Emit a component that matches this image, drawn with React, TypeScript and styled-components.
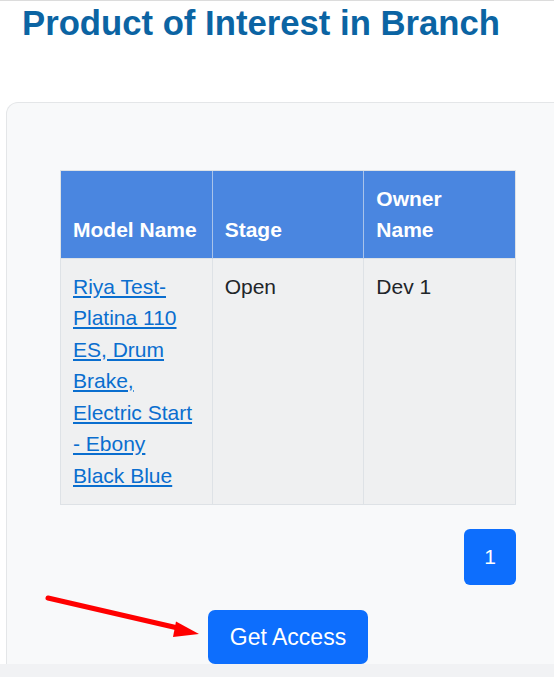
import React from "react";
import styled, { createGlobalStyle } from "styled-components";

const GlobalStyle = createGlobalStyle`
  html, body { margin: 0; padding: 0; overflow: hidden; background: #ffffff; }
  body { font-family: "Liberation Sans", Arial, sans-serif; }
`;

const Page = styled.div`
  position: relative;
  height: 677px;
  box-sizing: border-box;
  display: flex;
  flex-direction: column;
  overflow: hidden;
  border-top: 1px solid #dcdcdc;
`;

const Title = styled.h1`
  margin: 2px 0 0 22px;
  font-size: 34.7px;
  line-height: 1.2;
  font-weight: 700;
  color: #0b64a3;
  white-space: nowrap;
`;

const Card = styled.section`
  flex: 1;
  min-height: 0;
  margin: 57px -60px 0 6px;
  padding: 67px 0 0 53px;
  border: 1px solid #e4e6e8;
  border-bottom: none;
  border-radius: 12px 12px 0 0;
  background: #f8f9fa;
  overflow: hidden;
`;

const Content = styled.div`
  width: 456px;
  display: flex;
  flex-direction: column;
`;

const Table = styled.table`
  width: 456px;
  table-layout: fixed;
  border-collapse: separate;
  border-spacing: 0;
  border-top: 1px solid #dee2e6;
  border-left: 1px solid #dee2e6;
`;

const HeadCell = styled.th`
  background: #4a86e0;
  color: #ffffff;
  font-size: 21px;
  line-height: 1.5;
  font-weight: 700;
  text-align: left;
  vertical-align: bottom;
  padding: 12px;
  border-right: 1px solid #a9c3ea;
  border-bottom: 1px solid #dee2e6;
  &:last-child { border-right-color: #dee2e6; }
`;

const Cell = styled.td`
  background: #eff0f1;
  color: #212529;
  font-size: 21px;
  line-height: 1.5;
  vertical-align: top;
  padding: 12px 12px 13px;
  border-right: 1px solid #dee2e6;
  border-bottom: 1px solid #dee2e6;
`;

const ModelLink = styled.a`
  color: #0a6ecf;
  text-decoration: underline;
`;

const Pager = styled.div`
  display: flex;
  justify-content: flex-end;
  margin-top: 24px;
`;

const PageButton = styled.button`
  border: none;
  background: #0d6efd;
  color: #ffffff;
  font-family: inherit;
  font-size: 21px;
  line-height: 1.5;
  padding: 12px 20px;
  border-radius: 6px;
`;

const ActionRow = styled.div`
  display: flex;
  justify-content: center;
  margin-top: 25px;
`;

const AccessButton = styled.button`
  border: none;
  background: #0d6efd;
  color: #ffffff;
  font-family: inherit;
  font-size: 23px;
  line-height: 1.5;
  padding: 10px 22px;
  border-radius: 7px;
`;

const FooterBand = styled.div`
  flex-shrink: 0;
  height: 13px;
  background: #f1f2f4;
  position: relative;
  z-index: 1;
`;

const ArrowLayer = styled.svg`
  position: absolute;
  left: 0;
  top: 0;
  pointer-events: none;
`;

export default function App() {
  return (
    <>
      <GlobalStyle />
      <Page>
        <Title>Product of Interest in Branch</Title>
        <Card>
          <Content>
            <Table>
              <thead>
                <tr>
                  <HeadCell>Model Name</HeadCell>
                  <HeadCell>Stage</HeadCell>
                  <HeadCell>Owner Name</HeadCell>
                </tr>
              </thead>
              <tbody>
                <tr>
                  <Cell>
                    <ModelLink href="#">
                      Riya Test-Platina 110 ES, Drum Brake, Electric Start - Ebony Black Blue
                    </ModelLink>
                  </Cell>
                  <Cell>Open</Cell>
                  <Cell>Dev 1</Cell>
                </tr>
              </tbody>
            </Table>
            <Pager>
              <PageButton>1</PageButton>
            </Pager>
            <ActionRow>
              <AccessButton>Get Access</AccessButton>
            </ActionRow>
          </Content>
        </Card>
        <FooterBand />
        <ArrowLayer width="554" height="677" viewBox="0 0 554 677">
          <line x1="48" y1="597" x2="180" y2="627.5" stroke="#ff0000" strokeWidth="5" strokeLinecap="round" />
          <polygon points="199,633 176,620.5 173,636" fill="#ff0000" />
        </ArrowLayer>
      </Page>
    </>
  );
}
